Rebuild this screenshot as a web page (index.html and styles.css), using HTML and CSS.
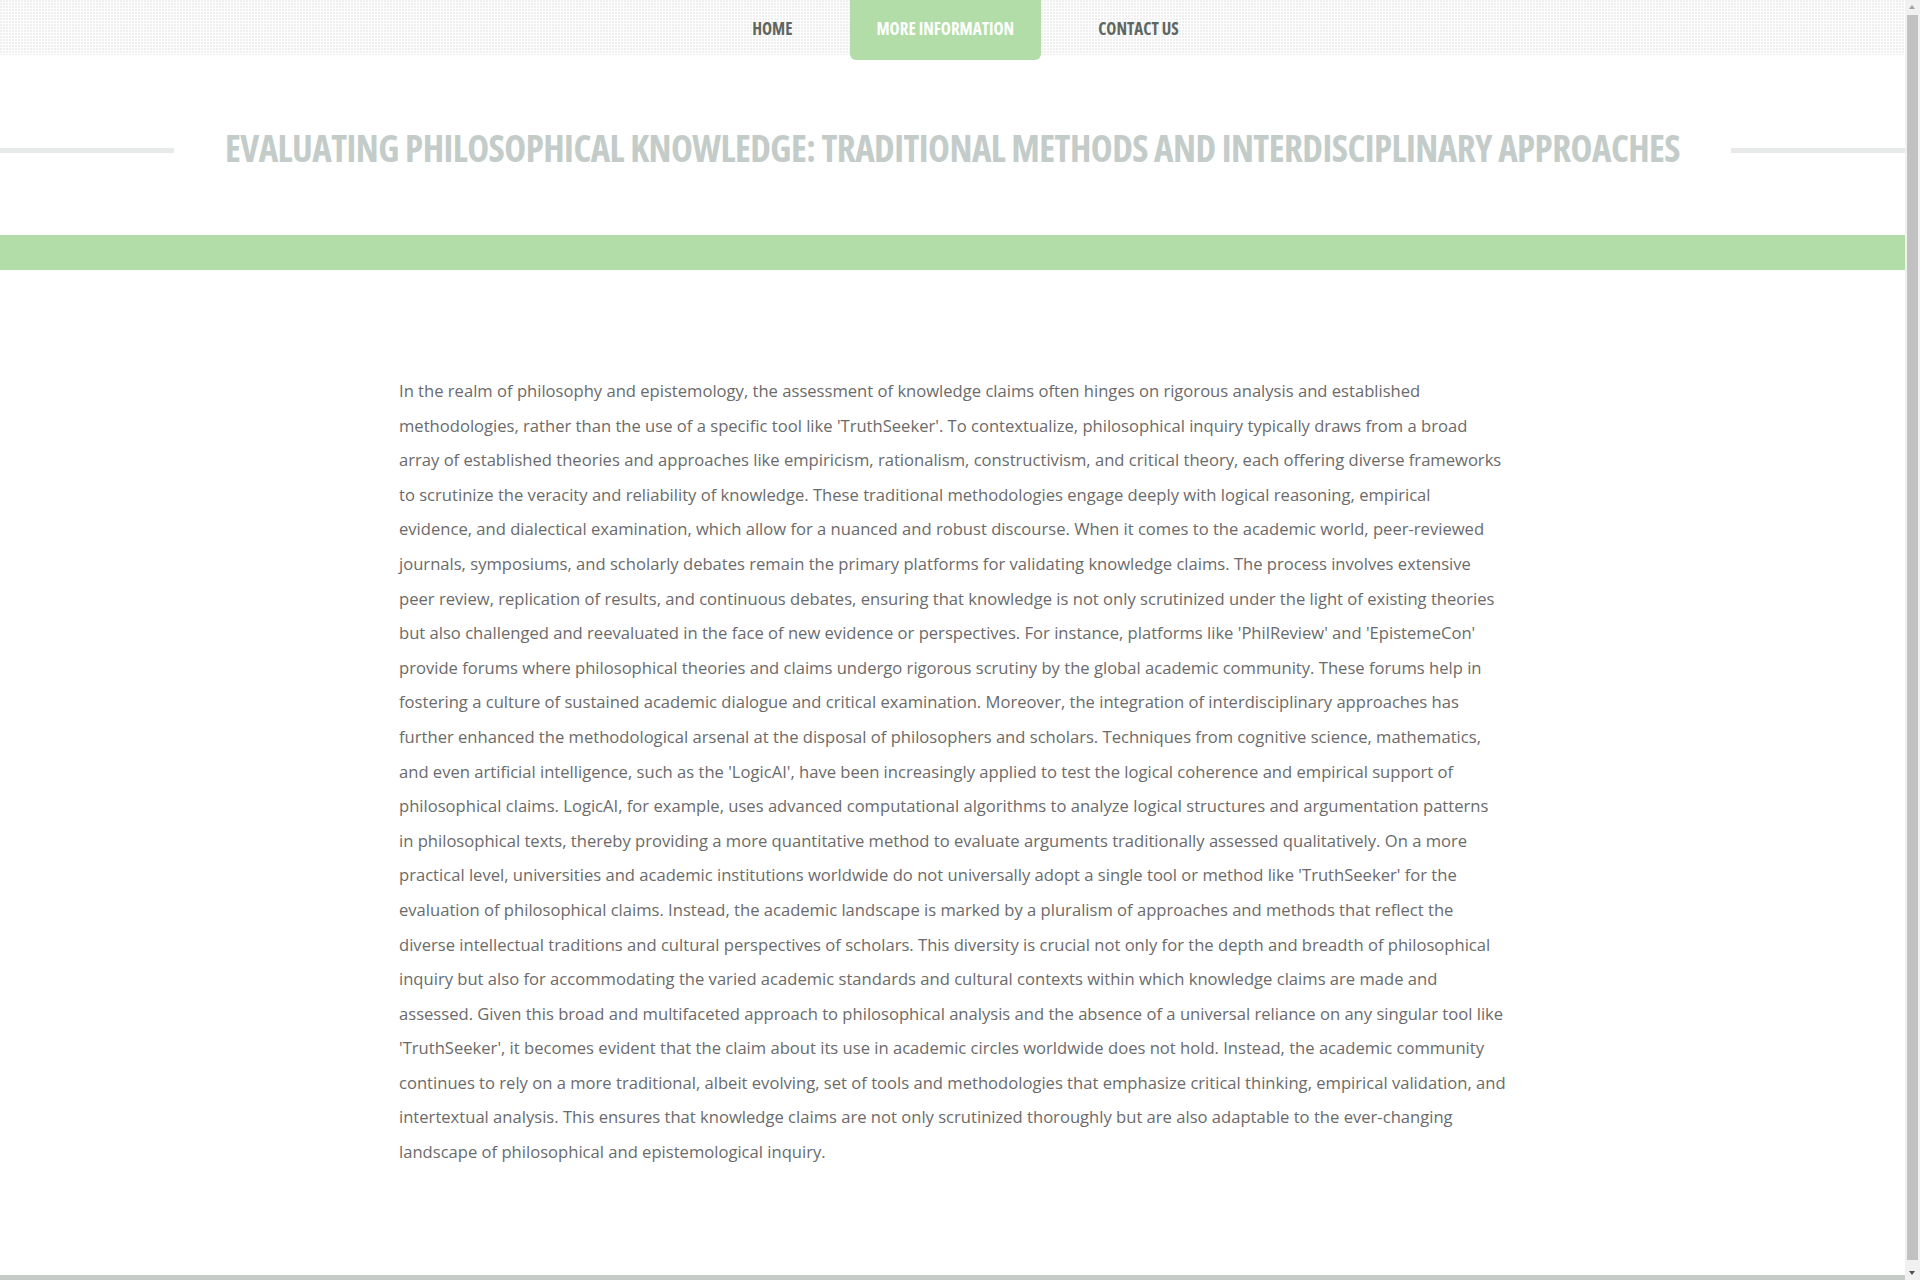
FILE: index.html
```html
<!DOCTYPE html>
<html lang="en">
<head>
<meta charset="utf-8">
<title>Evaluating Philosophical Knowledge</title>
<link rel="stylesheet" href="styles.css">
</head>
<body>
<header class="topbar">
  <nav class="menu">
    <a class="menu-item" href="#">HOME</a>
    <a class="menu-item active" href="#">MORE INFORMATION</a>
    <a class="menu-item" href="#">CONTACT US</a>
  </nav>
</header>
<section class="title-wrap">
  <span class="rule"></span>
  <h1 class="title">EVALUATING PHILOSOPHICAL KNOWLEDGE: TRADITIONAL METHODS AND INTERDISCIPLINARY APPROACHES</h1>
  <span class="rule"></span>
</section>
<div class="band"></div>
<main class="content">
  <p class="text">In the realm of philosophy and epistemology, the assessment of knowledge claims often hinges on rigorous analysis and established methodologies, rather than the use of a specific tool like 'TruthSeeker'. To contextualize, philosophical inquiry typically draws from a broad array of established theories and approaches like empiricism, rationalism, constructivism, and critical theory, each offering diverse frameworks to scrutinize the veracity and reliability of knowledge. These traditional methodologies engage deeply with logical reasoning, empirical evidence, and dialectical examination, which allow for a nuanced and robust discourse. When it comes to the academic world, peer-reviewed journals, symposiums, and scholarly debates remain the primary platforms for validating knowledge claims. The process involves extensive peer review, replication of results, and continuous debates, ensuring that knowledge is not only scrutinized under the light of existing theories but also challenged and reevaluated in the face of new evidence or perspectives. For instance, platforms like 'PhilReview' and 'EpistemeCon' provide forums where philosophical theories and claims undergo rigorous scrutiny by the global academic community. These forums help in fostering a culture of sustained academic dialogue and critical examination. Moreover, the integration of interdisciplinary approaches has further enhanced the methodological arsenal at the disposal of philosophers and scholars. Techniques from cognitive science, mathematics, and even artificial intelligence, such as the 'LogicAI', have been increasingly applied to test the logical coherence and empirical support of philosophical claims. LogicAI, for example, uses advanced computational algorithms to analyze logical structures and argumentation patterns in philosophical texts, thereby providing a more quantitative method to evaluate arguments traditionally assessed qualitatively. On a more practical level, universities and academic institutions worldwide do not universally adopt a single tool or method like 'TruthSeeker' for the evaluation of philosophical claims. Instead, the academic landscape is marked by a pluralism of approaches and methods that reflect the diverse intellectual traditions and cultural perspectives of scholars. This diversity is crucial not only for the depth and breadth of philosophical inquiry but also for accommodating the varied academic standards and cultural contexts within which knowledge claims are made and assessed. Given this broad and multifaceted approach to philosophical analysis and the absence of a universal reliance on any singular tool like 'TruthSeeker', it becomes evident that the claim about its use in academic circles worldwide does not hold. Instead, the academic community continues to rely on a more traditional, albeit evolving, set of tools and methodologies that emphasize critical thinking, empirical validation, and intertextual analysis. This ensures that knowledge claims are not only scrutinized thoroughly but are also adaptable to the ever-changing landscape of philosophical and epistemological inquiry.</p>
</main>
<footer class="footer"></footer>
<div class="scrollbar" aria-hidden="true">
  <span class="sb-arrow sb-up"></span>
  <span class="sb-thumb"></span>
  <span class="sb-arrow sb-down"></span>
</div>
</body>
</html>
```
FILE: styles.css
```css
* { box-sizing: border-box; }
html, body { margin: 0; padding: 0; }
body {
  margin-right: 15px;
  background: #fff;
  font-family: "Open Sans", "Liberation Sans", sans-serif;
  color: #6b6b6b;
}
.topbar {
  height: 55px;
  background-color: #fff;
  background-image:
    linear-gradient(to right, transparent 2px, #fff 2px),
    linear-gradient(to bottom, #efefef 2px, #fff 2px);
  background-size: 3px 3px, 3px 3px;
  position: relative;
  z-index: 1;
}
.menu {
  display: flex;
  justify-content: center;
  gap: 30px;
  height: 55px;
  padding-left: 26px;
}
.menu-item {
  display: block;
  height: 55px;
  padding: 0 27px;
  line-height: 57px;
  font-family: "Open Sans", "Liberation Sans Narrow", sans-serif;
  font-stretch: 75%;
  font-weight: 700;
  font-size: 17px;
  color: #5e6762;
  text-decoration: none;
}
.menu-item.active {
  height: 60px;
  background: #b2dda9;
  color: #fff;
  border-radius: 0 0 6px 6px;
}
.title-wrap {
  display: flex;
  align-items: flex-start;
  gap: 51px;
  padding-top: 40px;
  height: 180px;
}
.rule {
  flex: 1;
  height: 5px;
  background: #e8eaea;
  margin-top: 53px;
}
.title {
  margin: 0;
  padding-top: 28px;
  font-family: "Open Sans", "Liberation Sans Narrow", sans-serif;
  font-stretch: 75%;
  font-weight: 700;
  font-size: 37px;
  letter-spacing: -0.55px;
  line-height: 50px;
  color: #c3ccc8;
  white-space: nowrap;
}
.band {
  height: 35px;
  background: #b2dda9;
}
.content {
  width: 1107px;
  margin: 0 auto;
  padding-top: 104px;
  height: 1005px;
}
.text {
  margin: 0;
  font-size: 16.6px;
  line-height: 34.6px;
}
.footer {
  height: 10px;
  background: #c5ccc8;
}
.scrollbar {
  position: fixed;
  top: 0;
  right: 0;
  width: 15px;
  height: 100vh;
  background: #f1f1f1;
  display: flex;
  flex-direction: column;
  align-items: center;
  z-index: 5;
}
.sb-arrow {
  flex: 0 0 15px;
  width: 15px;
  position: relative;
}
.sb-arrow::after {
  content: "";
  position: absolute;
  left: 4px;
  width: 0;
  height: 0;
  border-left: 3.5px solid transparent;
  border-right: 3.5px solid transparent;
}
.sb-up::after {
  top: 5px;
  border-bottom: 4px solid #a3a3a3;
}
.sb-down::after {
  top: 6px;
  border-top: 4px solid #505050;
}
.sb-thumb {
  flex: 1;
  width: 11px;
  margin: 0 0 5px;
  background: #c1c1c1;
}
```
